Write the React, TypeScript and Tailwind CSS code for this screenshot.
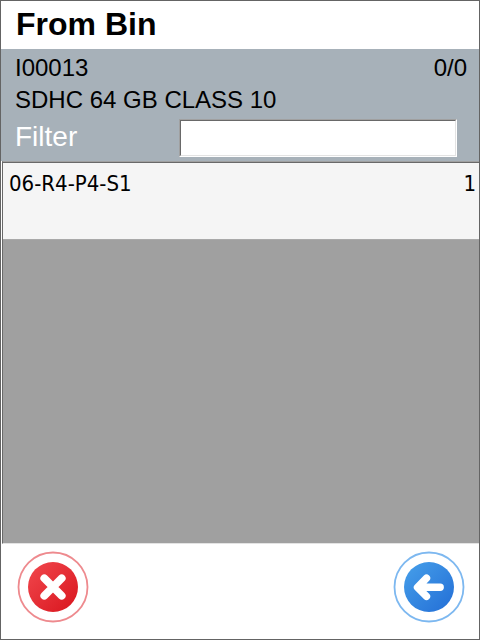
import { useState } from "react";

const bins = [{ code: "06-R4-P4-S1", quantity: 1 }];

function CancelIcon() {
  return (
    <svg viewBox="0 0 72 72" className="size-18" aria-hidden="true">
      <defs>
        <linearGradient id="cancel-fill" x1="0" y1="0" x2="1" y2="1">
          <stop offset="0.1" stopColor="#ef4349" />
          <stop offset="0.9" stopColor="#db1a22" />
        </linearGradient>
      </defs>
      <circle cx="36" cy="36" r="34.5" fill="#fff" stroke="#ee8a8e" strokeWidth="1.8" />
      <circle cx="36" cy="36" r="25" fill="url(#cancel-fill)" />
      <path d="M27.3 27.3l17.4 17.4M44.7 27.3l-17.4 17.4" stroke="#fff" strokeWidth="7.8" strokeLinecap="round" />
    </svg>
  );
}

function BackIcon() {
  return (
    <svg viewBox="0 0 72 72" className="size-18" aria-hidden="true">
      <defs>
        <linearGradient id="back-fill" x1="0" y1="0" x2="1" y2="1">
          <stop offset="0.1" stopColor="#439be8" />
          <stop offset="0.9" stopColor="#2673d8" />
        </linearGradient>
      </defs>
      <circle cx="36" cy="36" r="34.5" fill="#fff" stroke="#7db8f0" strokeWidth="1.8" />
      <circle cx="36" cy="36" r="25" fill="url(#back-fill)" />
      <path
        d="M33.5 27.2L24.5 36.3l9 9M25.5 36.3h21.7"
        fill="none"
        stroke="#fff"
        strokeWidth="7.4"
        strokeLinecap="round"
        strokeLinejoin="round"
      />
    </svg>
  );
}

export default function App() {
  const [filter, setFilter] = useState("");
  const visible = bins.filter((bin) => bin.code.toLowerCase().includes(filter.toLowerCase()));

  return (
    <div className="flex min-h-screen flex-col border border-[#646464] bg-white font-['Liberation_Sans',Arial,sans-serif] text-black">
      <header className="h-12 px-[15px]">
        <h1 className="text-[32px] leading-[46px] font-bold">From Bin</h1>
      </header>

      <section className="bg-[#a7b1b9] pt-[3px] pb-1">
        <div className="flex justify-between pr-3 pl-3.5 text-2xl leading-8">
          <span>I00013</span>
          <span>0/0</span>
        </div>
        <p className="pl-3.5 text-2xl leading-8">SDHC 64 GB CLASS 10</p>
        <div className="flex items-start pt-[3px] pr-5.5 pl-3.5">
          <label htmlFor="filter" className="w-41 text-[28px] leading-9 text-white">
            Filter
          </label>
          <div className="flex-1 border border-t-[#a0a0a0] border-r-white border-b-white border-l-[#a0a0a0]">
            <input
              id="filter"
              type="text"
              value={filter}
              onChange={(event) => setFilter(event.target.value)}
              className="block h-9 w-full border border-t-[#696969] border-r-[#e3e3e3] border-b-[#e3e3e3] border-l-[#696969] bg-white px-1 text-2xl outline-none"
            />
          </div>
        </div>
      </section>

      <main className="ml-px flex flex-1 flex-col border-t border-b border-l border-t-[#a0a0a0] border-b-[#e3e3e3] border-l-[#696969] bg-[#a0a0a0]">
        <table className="w-full border-t border-[#696969] bg-[#f5f5f5] font-['DejaVu_Sans_Condensed','DejaVu_Sans',sans-serif] text-[22px]">
          <tbody>
            {visible.map((bin) => (
              <tr key={bin.code} className="h-[77px] border-b border-[#a9a9a9] align-top">
                <td className="pt-1.5 pl-1.5 leading-[30px]">{bin.code}</td>
                <td className="pt-1.5 pr-[3px] text-right leading-[30px]">{bin.quantity}</td>
              </tr>
            ))}
          </tbody>
        </table>
      </main>

      <footer className="flex justify-between pt-[7px] pr-3.5 pb-4 pl-4">
        <button type="button" aria-label="Cancel" className="rounded-full">
          <CancelIcon />
        </button>
        <button type="button" aria-label="Back" className="rounded-full">
          <BackIcon />
        </button>
      </footer>
    </div>
  );
}
